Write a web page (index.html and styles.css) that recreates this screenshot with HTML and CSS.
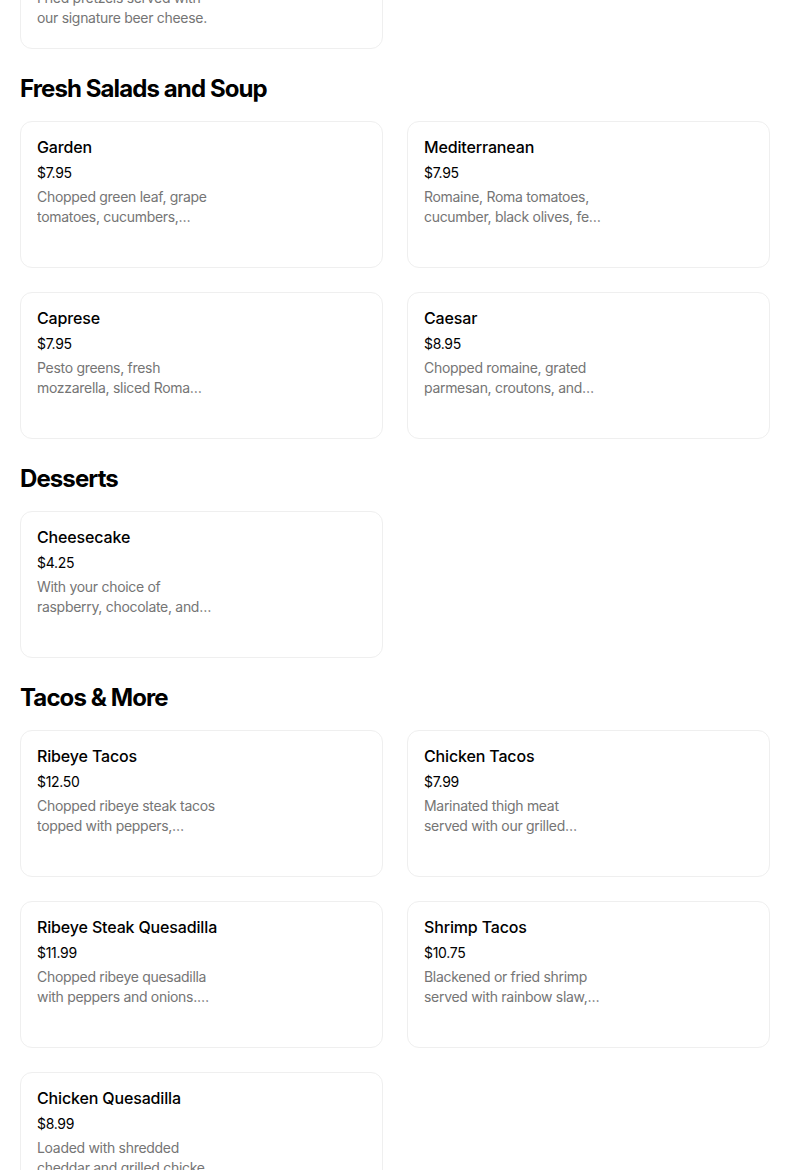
FILE: index.html
```html
<!DOCTYPE html>
<html lang="en">
<head>
<meta charset="utf-8">
<title>Menu</title>
<link rel="stylesheet" href="styles.css">
</head>
<body>
<main class="menu">
  <section class="section section-first">
    <div class="grid">
      <article class="card">
        <div class="info">
          <h3 class="name">Soft Pretzel Bites with Beer Cheese</h3>
          <div class="price">$8.50</div>
          <p class="desc">Fried pretzels served with our signature beer cheese.</p>
        </div>
      </article>
    </div>
  </section>

  <section class="section">
    <h2 class="heading">Fresh Salads and Soup</h2>
    <div class="grid">
      <article class="card">
        <div class="info">
          <h3 class="name">Garden</h3>
          <div class="price">$7.95</div>
          <p class="desc">Chopped green leaf, grape tomatoes, cucumbers, shredded carrots, and croutons.</p>
        </div>
      </article>
      <article class="card">
        <div class="info">
          <h3 class="name">Mediterranean</h3>
          <div class="price">$7.95</div>
          <p class="desc">Romaine, Roma tomatoes, cucumber, black olives, feta cheese, and red onion.</p>
        </div>
      </article>
      <article class="card">
        <div class="info">
          <h3 class="name">Caprese</h3>
          <div class="price">$7.95</div>
          <p class="desc">Pesto greens, fresh mozzarella, sliced Roma tomatoes, and balsamic glaze.</p>
        </div>
      </article>
      <article class="card">
        <div class="info">
          <h3 class="name">Caesar</h3>
          <div class="price">$8.95</div>
          <p class="desc">Chopped romaine, grated parmesan, croutons, and Caesar dressing.</p>
        </div>
      </article>
    </div>
  </section>

  <section class="section">
    <h2 class="heading">Desserts</h2>
    <div class="grid">
      <article class="card">
        <div class="info">
          <h3 class="name">Cheesecake</h3>
          <div class="price">$4.25</div>
          <p class="desc">With your choice of raspberry, chocolate, and caramel toppings.</p>
        </div>
      </article>
    </div>
  </section>

  <section class="section">
    <h2 class="heading">Tacos &amp; More</h2>
    <div class="grid">
      <article class="card">
        <div class="info">
          <h3 class="name">Ribeye Tacos</h3>
          <div class="price">$12.50</div>
          <p class="desc">Chopped ribeye steak tacos topped with peppers, onions, and cilantro.</p>
        </div>
      </article>
      <article class="card">
        <div class="info">
          <h3 class="name">Chicken Tacos</h3>
          <div class="price">$7.99</div>
          <p class="desc">Marinated thigh meat served with our grilled pineapple salsa.</p>
        </div>
      </article>
      <article class="card">
        <div class="info">
          <h3 class="name">Ribeye Steak Quesadilla</h3>
          <div class="price">$11.99</div>
          <p class="desc">Chopped ribeye quesadilla with peppers and onions. Served with salsa.</p>
        </div>
      </article>
      <article class="card">
        <div class="info">
          <h3 class="name">Shrimp Tacos</h3>
          <div class="price">$10.75</div>
          <p class="desc">Blackened or fried shrimp served with rainbow slaw, chipotle aioli.</p>
        </div>
      </article>
      <article class="card">
        <div class="info">
          <h3 class="name">Chicken Quesadilla</h3>
          <div class="price">$8.99</div>
          <p class="desc">Loaded with shredded cheddar and grilled chicken. Served with salsa.</p>
        </div>
      </article>
    </div>
  </section>
</main>
</body>
</html>
```

FILE: styles.css
```css
* { box-sizing: border-box; }

html, body {
  margin: 0;
  padding: 0;
  background: #ffffff;
}

body {
  font-family: Inter, "Noto Sans", sans-serif;
  color: #000000;
  overflow: hidden;
}

.menu {
  width: 804px;
  padding: 0 34px 0 20px;
  margin-top: -102px;
}

.section {
  display: flex;
  flex-direction: column;
}

.heading {
  margin: 24px 0 16px;
  font-size: 24px;
  line-height: 32px;
  font-weight: 700;
  letter-spacing: -0.9px;
  color: #000;
}

.grid {
  display: grid;
  grid-template-columns: 1fr 1fr;
  gap: 24px;
}

.card {
  min-height: 147px;
  border: 1px solid #efefef;
  border-radius: 12px;
  padding: 13px 16px 20px;
  background: #fff;
}

.info {
  width: 200px;
  display: flex;
  flex-direction: column;
}

.name {
  margin: 0;
  font-size: 16px;
  line-height: 24px;
  font-weight: 500;
  letter-spacing: -0.15px;
  color: #000;
}

.price {
  margin-top: 4px;
  font-size: 14px;
  line-height: 20px;
  color: #000;
  letter-spacing: -0.3px;
}

.desc {
  width: 181px;
  margin: 4px 0 0;
  font-size: 14px;
  line-height: 20px;
  letter-spacing: -0.3px;
  color: #757575;
  display: -webkit-box;
  -webkit-line-clamp: 2;
  -webkit-box-orient: vertical;
  overflow: hidden;
}
```
